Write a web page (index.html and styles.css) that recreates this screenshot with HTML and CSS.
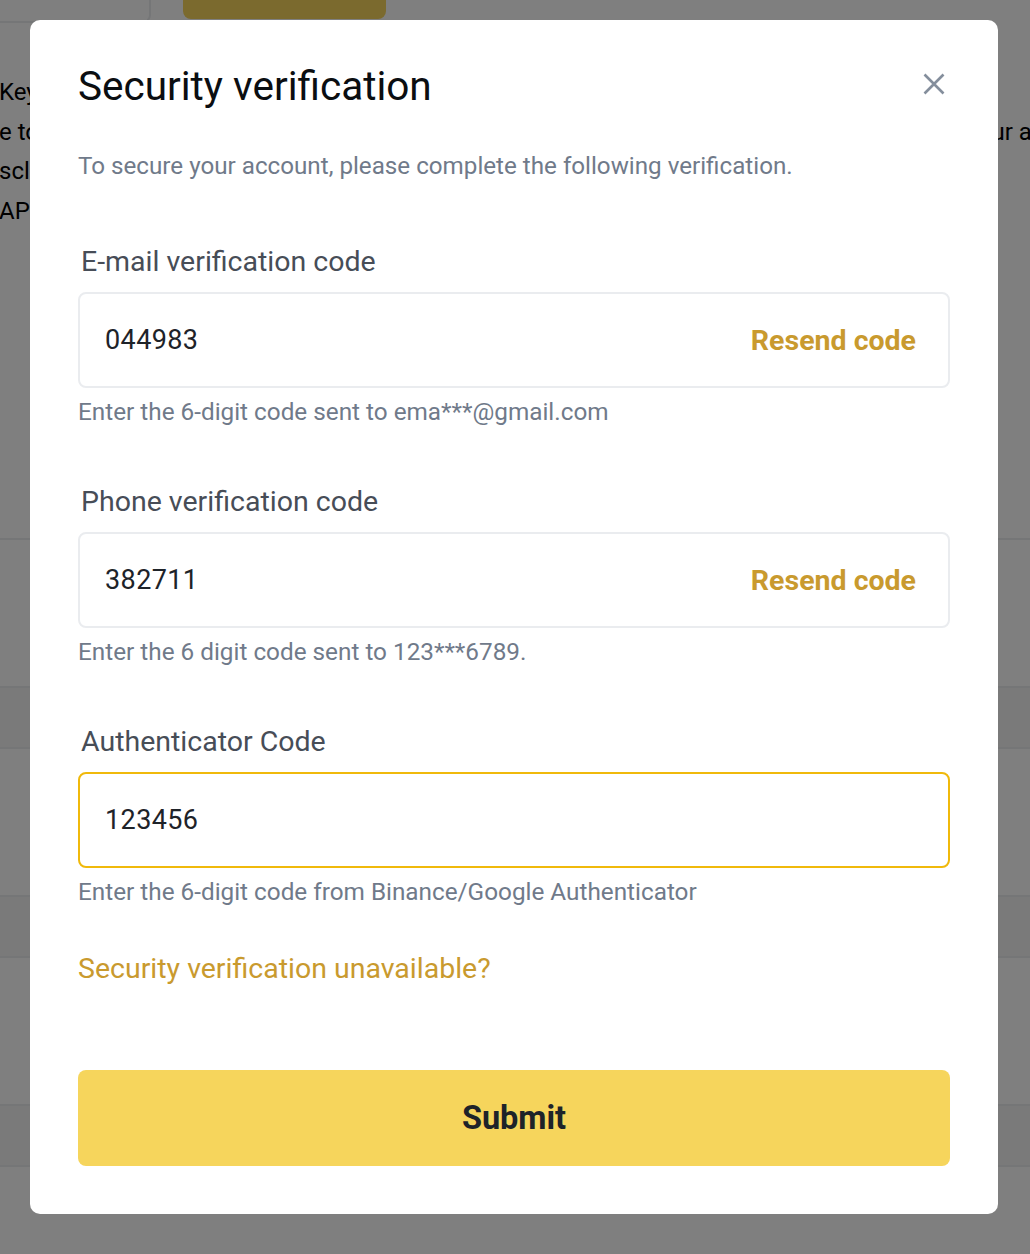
FILE: index.html
```html
<!DOCTYPE html>
<html lang="en">
<head>
<meta charset="utf-8">
<title>Security verification</title>
<link rel="stylesheet" href="styles.css">
</head>
<body>
<div class="page">
  <div class="topstrip">
    <div class="topcell"></div>
    <div class="topbtn"></div>
  </div>
  <div class="para">
    <div class="pline">Keys</div>
    <div class="pline pline-split"><span>e to</span><span class="rightfrag">your account</span></div>
    <div class="pline">sclose</div>
    <div class="pline">API</div>
  </div>
  <div class="table">
    <div class="row"></div>
    <div class="band"></div>
    <div class="row"></div>
    <div class="band"></div>
    <div class="row"></div>
    <div class="band"></div>
    <div class="row"></div>
  </div>
</div>

<div class="overlay">
  <div class="modal">
    <div class="modal-head">
      <h1 class="title">Security verification</h1>
      <button class="close" aria-label="Close">
        <svg viewBox="0 0 24 24" width="24" height="24"><path d="M2.5 2.5 L21.5 21.5 M21.5 2.5 L2.5 21.5" stroke="#848E9C" stroke-width="2.6" stroke-linecap="butt" fill="none"/></svg>
      </button>
    </div>
    <p class="subtitle">To secure your account, please complete the following verification.</p>

    <div class="field">
      <div class="label">E-mail verification code</div>
      <div class="input"><span class="value">044983</span><span class="resend">Resend code</span></div>
      <div class="help">Enter the 6-digit code sent to ema***@gmail.com</div>
    </div>

    <div class="field">
      <div class="label">Phone verification code</div>
      <div class="input"><span class="value">382711</span><span class="resend">Resend code</span></div>
      <div class="help">Enter the 6 digit code sent to 123***6789.</div>
    </div>

    <div class="field">
      <div class="label">Authenticator Code</div>
      <div class="input input-focus"><span class="value">123456</span></div>
      <div class="help">Enter the 6-digit code from Binance/Google Authenticator</div>
    </div>

    <div class="unavailable">Security verification unavailable?</div>

    <button class="submit">Submit</button>
  </div>
</div>
</body>
</html>
```

FILE: styles.css
```css
* { box-sizing: border-box; }
html, body { margin: 0; padding: 0; }
body {
  width: 1030px;
  height: 1254px;
  overflow: hidden;
  background: #ffffff;
  font-family: Roboto, "Liberation Sans", sans-serif;
}

/* background page */
.page { width: 1030px; height: 1254px; overflow: hidden; }
.topstrip { display: flex; height: 40px; }
.topcell {
  width: 151px;
  height: 23px;
  border-right: 2px solid #EAECEF;
  border-bottom: 2px solid #EAECEF;
  border-bottom-right-radius: 8px;
}
.topbtn {
  margin-left: 32px;
  width: 203px;
  height: 19px;
  background: #F6D45C;
  border-radius: 0 0 8px 8px;
}
.para {
  margin-top: 33px;
  font-size: 24px;
  line-height: 39.5px;
  color: #000;
  white-space: nowrap;
}
.pline { margin-left: -1px; }
.pline-split { display: flex; justify-content: space-between; }
.rightfrag { margin-right: -75px; }
.table { margin-top: 307px; border-top: 2px solid #EAECEF; }
.row { height: 148px; border-bottom: 2px solid #EAECEF; }
.band { height: 61px; background: #F5F5F5; border-bottom: 2px solid #EAECEF; }

/* overlay + modal */
.overlay {
  position: fixed;
  inset: 0;
  background: rgba(0, 0, 0, 0.5);
  display: flex;
  justify-content: flex-start;
  align-items: flex-start;
  padding: 20px 0 0 30px;
}
.modal {
  width: 968px;
  background: #ffffff;
  border-radius: 10px;
  padding: 42px 48px 48px 48px;
  display: flex;
  flex-direction: column;
}
.modal-head {
  display: flex;
  justify-content: space-between;
  align-items: center;
  height: 48px;
}
.title {
  margin: 0;
  font-size: 40.5px;
  line-height: 48px;
  font-weight: 400;
  color: #0B0E11;
}
.close {
  border: 0;
  background: none;
  padding: 0;
  margin-right: 4px;
  margin-bottom: 4px;
  width: 24px;
  height: 24px;
  display: flex;
}
.subtitle {
  margin: 40px 0 0 0;
  font-size: 24.2px;
  line-height: 32px;
  color: #707A8A;
}
.field { margin-top: 60px; display: flex; flex-direction: column; }
.field + .field { margin-top: 54px; }
.label {
  font-size: 28.5px;
  line-height: 40px;
  color: #474D57;
  padding-left: 3px;
}
.input {
  margin-top: 10px;
  height: 96px;
  border: 2px solid #EAECEF;
  border-radius: 8px;
  display: flex;
  align-items: center;
  justify-content: space-between;
  padding: 0 32px 0 25px;
}
.input-focus { border-color: #F0B90B; }
.value {
  font-size: 27px;
  font-weight: 400;
  color: #1E2329;
  letter-spacing: 0.4px;
}
.resend {
  font-size: 28.5px;
  font-weight: 700;
  color: #C99A2E;
}
.help {
  margin-top: 8px;
  font-size: 24.3px;
  line-height: 32px;
  color: #707A8A;
}
.unavailable {
  margin-top: 41px;
  font-size: 28.5px;
  line-height: 40px;
  color: #C99A2E;
}
.submit {
  margin-top: 81px;
  height: 96px;
  border: 0;
  border-radius: 8px;
  background: #F6D55C;
  font-family: Roboto, "Liberation Sans", sans-serif;
  font-size: 32.5px;
  font-weight: 700;
  color: #1E2329;
}
```
